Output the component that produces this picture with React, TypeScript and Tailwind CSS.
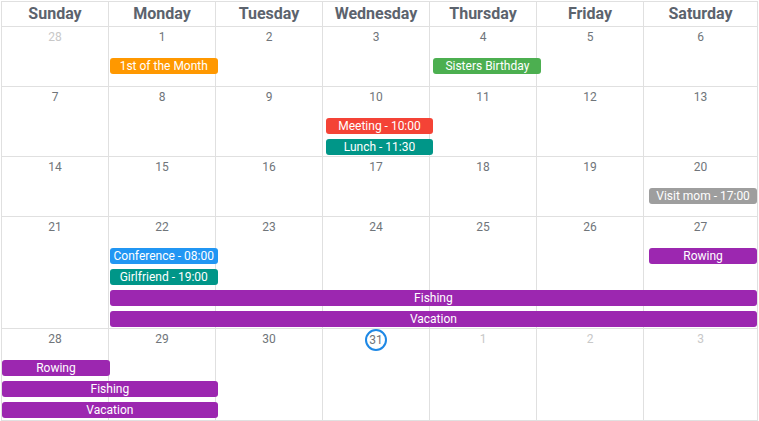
import React from "react";

type Ev = { label: string; color: string; col: number; span: number; row: number };
type Week = { days: { n: number; other?: boolean; today?: boolean }[]; height: string; events: Ev[] };

const C = {
  orange: "bg-[#ff9800]",
  green: "bg-[#4caf50]",
  red: "bg-[#f44336]",
  teal: "bg-[#009688]",
  gray: "bg-[#9e9e9e]",
  blue: "bg-[#2196f3]",
  purple: "bg-[#9c27b0]",
};

const weeks: Week[] = [
  {
    days: [{ n: 28, other: true }, { n: 1 }, { n: 2 }, { n: 3 }, { n: 4 }, { n: 5 }, { n: 6 }],
    height: "h-[60px]",
    events: [
      { label: "1st of the Month", color: C.orange, col: 2, span: 1, row: 1 },
      { label: "Sisters Birthday", color: C.green, col: 5, span: 1, row: 1 },
    ],
  },
  {
    days: [{ n: 7 }, { n: 8 }, { n: 9 }, { n: 10 }, { n: 11 }, { n: 12 }, { n: 13 }],
    height: "h-[70px]",
    events: [
      { label: "Meeting - 10:00", color: C.red, col: 4, span: 1, row: 1 },
      { label: "Lunch - 11:30", color: C.teal, col: 4, span: 1, row: 2 },
    ],
  },
  {
    days: [{ n: 14 }, { n: 15 }, { n: 16 }, { n: 17 }, { n: 18 }, { n: 19 }, { n: 20 }],
    height: "h-[60px]",
    events: [{ label: "Visit mom - 17:00", color: C.gray, col: 7, span: 1, row: 1 }],
  },
  {
    days: [{ n: 21 }, { n: 22 }, { n: 23 }, { n: 24 }, { n: 25 }, { n: 26 }, { n: 27 }],
    height: "h-[112px]",
    events: [
      { label: "Conference - 08:00", color: C.blue, col: 2, span: 1, row: 1 },
      { label: "Girlfriend - 19:00", color: C.teal, col: 2, span: 1, row: 2 },
      { label: "Fishing", color: C.purple, col: 2, span: 6, row: 3 },
      { label: "Vacation", color: C.purple, col: 2, span: 6, row: 4 },
      { label: "Rowing", color: C.purple, col: 7, span: 1, row: 1 },
    ],
  },
  {
    days: [
      { n: 28 },
      { n: 29 },
      { n: 30 },
      { n: 31, today: true },
      { n: 1, other: true },
      { n: 2, other: true },
      { n: 3, other: true },
    ],
    height: "h-[92px]",
    events: [
      { label: "Rowing", color: C.purple, col: 1, span: 1, row: 1 },
      { label: "Fishing", color: C.purple, col: 1, span: 2, row: 2 },
      { label: "Vacation", color: C.purple, col: 1, span: 2, row: 3 },
    ],
  },
];

const dayNames = ["Sunday", "Monday", "Tuesday", "Wednesday", "Thursday", "Friday", "Saturday"];

export default function App() {
  return (
    <div className="bg-white w-[759px] h-[421px]" style={{ fontFamily: "Roboto, 'Liberation Sans', sans-serif" }}>
      <div className="ml-px mt-px w-[757px] border-l border-t border-[#e0e0e0]">
        <div className="grid grid-cols-[repeat(6,107px)_1fr]">
          {dayNames.map((d) => (
            <div
              key={d}
              className="h-[25px] border-r border-b border-[#e0e0e0] flex items-center justify-center text-[16px] font-bold text-[#5c636d] leading-none"
            >
              {d}
            </div>
          ))}
        </div>
        {weeks.map((w, wi) => (
          <div key={wi} className={`grid ${w.height}`}>
            <div className="[grid-area:1/1] grid grid-cols-[repeat(6,107px)_1fr]">
              {w.days.map((d, di) => (
                <div key={di} className="border-r border-b border-[#e0e0e0]">
                  <div className="h-[20px] flex items-center justify-center">
                    {d.today ? (
                      <span className="w-[22px] h-[22px] rounded-full border-2 border-[#1e88e5] flex items-center justify-center text-[12px] text-[#70757a] mt-[1px]">
                        {d.n}
                      </span>
                    ) : (
                      <span className={`text-[12px] ${d.other ? "text-[#c8c8c8]" : "text-[#70757a]"}`}>{d.n}</span>
                    )}
                  </div>
                </div>
              ))}
            </div>
            <div className="[grid-area:1/1] grid grid-cols-7 auto-rows-[16px] gap-y-[5px] pt-[31px] pr-px pointer-events-none self-start">
              {w.events.map((e, ei) => (
                <div
                  key={ei}
                  className={`${e.color} rounded-[3px] text-white text-[12px] leading-[16px] h-[16px] text-center whitespace-nowrap overflow-hidden`}
                  style={{ gridColumn: `${e.col} / span ${e.span}`, gridRow: `${e.row}` }}
                >
                  {e.label}
                </div>
              ))}
            </div>
          </div>
        ))}
      </div>
    </div>
  );
}
